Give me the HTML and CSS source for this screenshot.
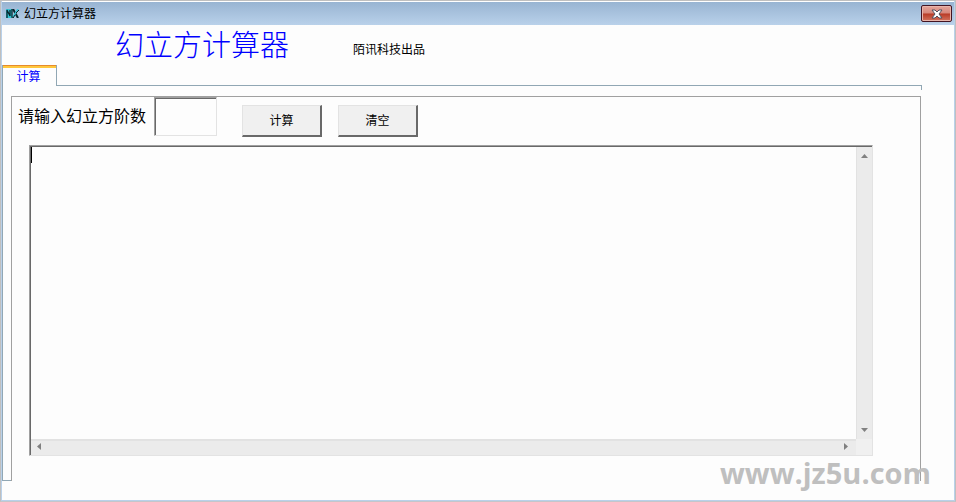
FILE: index.html
```html
<!DOCTYPE html>
<html lang="zh-CN">
  <head>
    <meta charset="utf-8">
    <title>幻立方计算器</title>
    <link rel="stylesheet" href="styles.css">
  </head>
  <body>
    <div class="window">
      <header class="title-bar">
        <svg class="app-icon" width="13" height="9" viewBox="0 0 13 9">
          <path d="M0 0h6v9H0z" fill="#35c4d4"/>
          <path d="M1 9V1l3 6V1M6 0v8h2" fill="none" stroke="#06242c" stroke-width="1.3"/>
          <path d="M7 0l5 9" fill="none" stroke="#06242c" stroke-width="2"/>
          <path d="M12 0L7 8" fill="none" stroke="#35c4d4" stroke-width="1.5"/>
          <path d="M13 1l-3 3M9 6L7 9" fill="none" stroke="#06242c"/>
        </svg>
        <span class="caption">幻立方计算器</span>
        <button class="close" type="button" aria-label="关闭">
          <svg width="12" height="10" viewBox="0 0 12 10">
            <path d="M1 1h3l2 2 2-2h3L8 5l3 4H8L6 7 4 9H1l3-4z" fill="#fff" stroke="#53535f" stroke-width="1"/>
          </svg>
        </button>
      </header>

      <div class="heading">
        <h1>幻立方计算器</h1>
        <span class="maker">陌讯科技出品</span>
      </div>

      <main class="tabs">
        <div class="tab-row">
          <button class="tab" type="button">计算</button>
          <div class="tab-line"></div>
        </div>
        <div class="tab-body">
          <div class="tab-edge"></div>
          <form class="panel" action="">
            <div class="fields">
              <label for="order">请输入幻立方阶数</label>
              <input id="order" type="text">
              <button class="push" type="button">计算</button>
              <button class="push" type="reset">清空</button>
            </div>
            <div class="output">
              <textarea id="result" aria-label="结果"></textarea>
              <div class="scroll-v">
                <svg width="7" height="4" viewBox="0 0 7 4"><path d="M0 4l3.5-4L7 4z" fill="#808080"/></svg>
                <svg width="7" height="4" viewBox="0 0 7 4"><path d="M0 0h7L3.5 4z" fill="#808080"/></svg>
              </div>
              <div class="scroll-h">
                <svg width="4" height="7" viewBox="0 0 4 7"><path d="M4 0v7L0 3.5z" fill="#808080"/></svg>
                <svg width="4" height="7" viewBox="0 0 4 7"><path d="M0 0v7l4-3.5z" fill="#808080"/></svg>
              </div>
              <i class="caret"></i>
            </div>
          </form>
        </div>
      </main>
      <span class="watermark">www.jz5u.com</span>
    </div>
  </body>
</html>
```

FILE: styles.css
```css
* {
  box-sizing: border-box;
}
body {
  margin: 0;
  color: #000;
  font: 12px/16px "Liberation Sans", "Noto Sans CJK SC", sans-serif;
}
button,
input,
textarea {
  border-radius: 0;
  color: inherit;
  font: inherit;
}
svg {
  display: block;
}

.window {
  background: #fdfdfd;
  border: 1px solid #bfbfbf;
  border-bottom-color: #c4c6ca;
  box-shadow: inset 0 0 0 1px #b9d1ea;
  display: flex;
  flex-direction: column;
  min-height: 100vh;
  padding: 0 1px 20px;
  position: relative;
}

.title-bar {
  align-items: center;
  background: linear-gradient(#98b4d2, #b9d1ea);
  border-top: 1px solid #fff;
  display: flex;
  height: 24px;
  padding: 0 2px 0 4px;
}
.caption {
  flex: 1;
  padding-left: 5px;
}
.close {
  align-items: center;
  background: linear-gradient(#e5a59b, #d6877a 48%, #b83a25 52%, #d3745f);
  border: 1px solid #431422;
  border-radius: 2px;
  box-shadow: inset 0 0 0 1px #e9b5ab;
  display: flex;
  height: 17px;
  justify-content: center;
  padding: 0;
  width: 31px;
}

.heading {
  align-items: center;
  display: flex;
  gap: 64px;
  height: 40px;
  padding: 2px 0 0 113px;
}
h1 {
  color: #00f;
  font-size: 29px;
  font-weight: 300;
  line-height: 38px;
  margin: 0;
}
.maker {
  padding-top: 8px;
}

.tabs {
  display: flex;
  flex: 1;
  flex-direction: column;
  margin-right: 32px;
}
.tab-row {
  display: flex;
  height: 25px;
}
.tab {
  background: linear-gradient(#e68b2c 1px, #ffc73c 1px, #ffc73c 3px, #fdfdfd 3px);
  border: solid #91a7b4;
  border-width: 0 1px;
  color: #00f;
  height: 21px;
  padding: 2px 2px 0 0;
  width: 55px;
}
.tab-line {
  border: solid #91a7b4;
  border-width: 1px 1px 0 0;
  flex: 1;
  margin-top: 20px;
}
.tab-body {
  display: flex;
  flex: 1;
  margin-top: -4px;
  padding-right: 1px;
}
.tab-edge {
  border: solid #91a7b4;
  border-width: 0 0 1px 1px;
  width: 9px;
}
.panel {
  border: 1px solid #a0a0a0;
  border-bottom: 0;
  display: flex;
  flex: 1;
  flex-direction: column;
  margin-top: 10px;
  padding: 0 47px 25px 17px;
}
.fields {
  align-items: flex-start;
  display: flex;
  height: 48px;
  margin-left: -11px;
}
.fields label {
  font-size: 16px;
  line-height: 40px;
}
#order {
  background: #fdfdfd;
  border: 1px solid;
  border-color: #a0a0a0 #e3e3e3 #e3e3e3 #a0a0a0;
  box-shadow: inset 1px 1px #696969;
  height: 39px;
  margin: 0 25px 0 8px;
  outline: 0;
  width: 63px;
}
.push {
  background: #f0f0f0;
  border: solid;
  border-width: 1px 2px 2px 1px;
  border-color: #e3e3e3 #696969 #696969 #e3e3e3;
  height: 32px;
  margin: 8px 16px 0 0;
  padding: 0;
  width: 80px;
}

.output {
  background: #f0f0f0;
  border: 1px solid;
  border-color: #a0a0a0 #e3e3e3 #e3e3e3 #a0a0a0;
  box-shadow: inset 1px 1px #696969;
  display: grid;
  flex: 1;
  grid-template: 1fr 16px / 1fr 16px;
  padding: 1px 0 0 1px;
  position: relative;
}
#result {
  background: #fdfdfd;
  border: 0;
  height: 100%;
  outline: 0;
  overflow: hidden;
  padding: 0 2px;
  resize: none;
  width: 100%;
}
.scroll-v,
.scroll-h {
  align-items: center;
  background: #ebebeb;
  border: 0 solid #e2e2e2;
  display: flex;
  justify-content: space-between;
}
.scroll-v {
  border-left-width: 1px;
  flex-direction: column;
  padding: 7px 0;
}
.scroll-h {
  border-top-width: 2px;
  padding: 0 8px 3px 6px;
}
.caret {
  background: #000;
  height: 16px;
  left: 1px;
  position: absolute;
  top: 1px;
  width: 1px;
}

.watermark {
  bottom: 8px;
  color: #bfbfbf;
  font: bold 29px/40px "Open Sans", sans-serif;
  position: absolute;
  right: 24px;
}
```
